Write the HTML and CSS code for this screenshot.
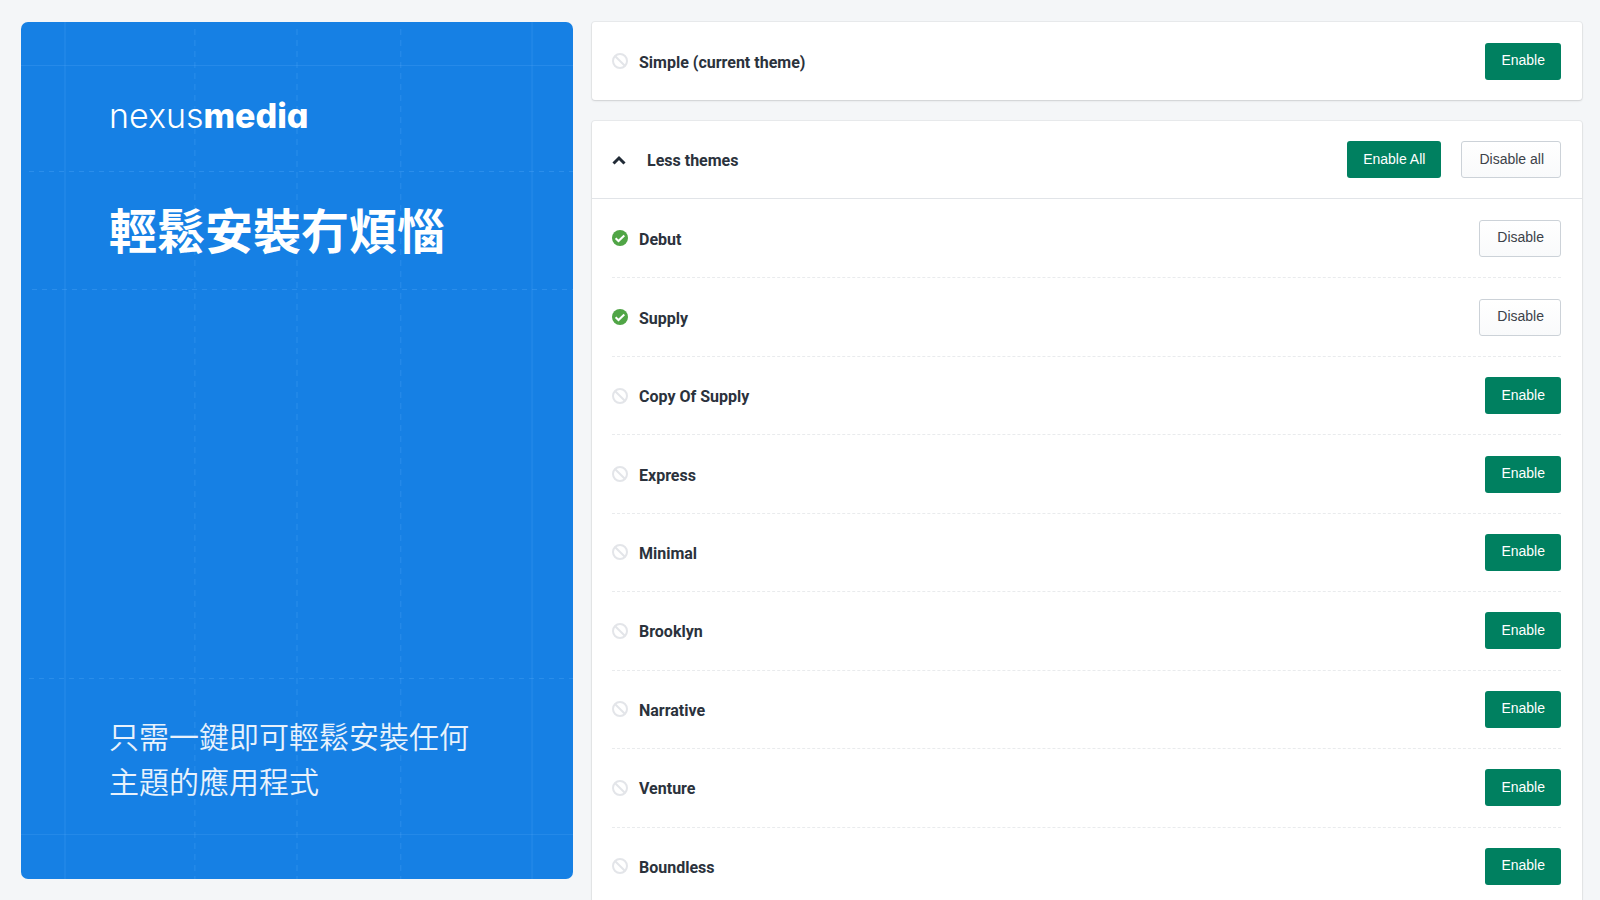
FILE: index.html
```html
<!DOCTYPE html>
<html lang="zh-Hant">
<head>
<meta charset="utf-8">
<meta name="viewport" content="width=device-width, initial-scale=1">
<title>nexusmedia</title>
<link rel="stylesheet" href="styles.css">
</head>
<body>
<svg class="sprite" aria-hidden="true">
  <symbol id="off" viewBox="0 0 16 16"><circle cx="8" cy="8" r="7" fill="none" stroke="#e3e5e9" stroke-width="2"/><path d="M3.2 3.2l9.6 9.6" stroke="#e3e5e9" stroke-width="2"/></symbol>
  <symbol id="on" viewBox="0 0 16 16"><circle cx="8" cy="8" r="8" fill="#50a546"/><path d="M3.6 8.2l2.9 2.8 5.8-5.5" fill="none" stroke="#fff" stroke-width="2"/></symbol>
</svg>
<main class="page">
  <section class="hero">
    <svg class="hero-grid" aria-hidden="true">
      <g class="solid wide"><line x1="44" y1="0" x2="44" y2="100%"/><line x1="92.6%" y1="0" x2="92.6%" y2="100%"/></g>
      <g class="solid"><line x1="0" y1="43.5" x2="100%" y2="43.5"/><line x1="0" y1="94.8%" x2="100%" y2="94.8%"/></g>
      <g class="dash-v"><line x1="31.5%" y1="7" x2="31.5%" y2="100%"/><line x1="50%" y1="7" x2="50%" y2="100%"/><line x1="68.8%" y1="7" x2="68.8%" y2="100%"/></g>
      <g class="dash-h"><line x1="8" y1="149.5" x2="100%" y2="149.5"/><line x1="11" y1="267.5" x2="100%" y2="267.5"/><line x1="8" y1="76.6%" x2="100%" y2="76.6%"/></g>
    </svg>
    <header class="hero-top">
      <div class="logo">nexus<b>media</b></div>
      <h1 class="title">輕鬆安裝冇煩惱</h1>
    </header>
    <p class="lead">只需一鍵即可輕鬆安裝任何主題的應用程式</p>
  </section>
  <div class="themes">
    <section class="card">
      <div class="row"><svg class="status"><use href="#off"/></svg><span class="name">Simple (current theme)</span><button class="btn primary" type="button">Enable</button></div>
    </section>
    <section class="card">
      <div class="head">
        <svg class="chevron" viewBox="0 0 14 10" aria-hidden="true"><path d="M1.5 8.5L7 3l5.5 5.5" fill="none" stroke="#212b36" stroke-width="3"/></svg>
        <h2 class="name">Less themes</h2>
        <div class="actions"><button class="btn primary" type="button">Enable All</button><button class="btn" type="button">Disable all</button></div>
      </div>
      <ul class="list">
        <li class="row"><svg class="status"><use href="#on"/></svg><span class="name">Debut</span><button class="btn" type="button">Disable</button></li>
        <li class="row"><svg class="status"><use href="#on"/></svg><span class="name">Supply</span><button class="btn" type="button">Disable</button></li>
        <li class="row"><svg class="status"><use href="#off"/></svg><span class="name">Copy Of Supply</span><button class="btn primary" type="button">Enable</button></li>
        <li class="row"><svg class="status"><use href="#off"/></svg><span class="name">Express</span><button class="btn primary" type="button">Enable</button></li>
        <li class="row"><svg class="status"><use href="#off"/></svg><span class="name">Minimal</span><button class="btn primary" type="button">Enable</button></li>
        <li class="row"><svg class="status"><use href="#off"/></svg><span class="name">Brooklyn</span><button class="btn primary" type="button">Enable</button></li>
        <li class="row"><svg class="status"><use href="#off"/></svg><span class="name">Narrative</span><button class="btn primary" type="button">Enable</button></li>
        <li class="row"><svg class="status"><use href="#off"/></svg><span class="name">Venture</span><button class="btn primary" type="button">Enable</button></li>
        <li class="row"><svg class="status"><use href="#off"/></svg><span class="name">Boundless</span><button class="btn primary" type="button">Enable</button></li>
      </ul>
    </section>
  </div>
</main>
</body>
</html>
```
FILE: styles.css
```css
* { box-sizing: border-box; }
body {
  margin: 0;
  height: 100vh;
  overflow: hidden;
  background: #f4f6f8;
  color: #2b323c;
  font-family: Roboto, "Noto Sans CJK TC", sans-serif;
}
.sprite { display: none; }
.page {
  display: grid;
  grid-template-columns: minmax(0, 552fr) minmax(0, 990fr);
  gap: 19px;
  align-items: start;
  padding: 22px 18px 21px 21px;
}

.hero {
  position: relative;
  display: flex;
  flex-direction: column;
  justify-content: space-between;
  min-height: calc(100vh - 43px);
  padding: 72px 88px 76px;
  border-radius: 7px;
  overflow: hidden;
  background: #1680e4;
  color: #fff;
}
.hero-grid { position: absolute; inset: 0; width: 100%; height: 100%; stroke: #6db8ff; }
.solid { stroke-opacity: .18; }
.wide { stroke-width: 2; stroke-opacity: .11; }
.dash-v { stroke-opacity: .25; stroke-dasharray: 6 5; }
.dash-h { stroke-opacity: .25; stroke-dasharray: 5 5; }
.hero-top, .lead { position: relative; }
.logo {
  font: 300 34px/44px Inter, sans-serif;
  font-feature-settings: "cv11";
}
.logo b { font-weight: 800; }
.title {
  margin: 55px 0 0;
  font: 700 48px/70px "Noto Sans CJK TC", sans-serif;
}
.lead {
  margin: 0;
  font: 350 30px/45px "Noto Sans CJK TC", sans-serif;
  color: #e8f2fc;
}

.themes { display: grid; gap: 21px; }
.card {
  background: #fff;
  border-radius: 3px;
  box-shadow: 0 0 0 1px rgba(63, 63, 68, .06), 0 1px 2px rgba(63, 63, 68, .15);
}
.row, .head { display: flex; align-items: center; min-height: 78px; }
.row { gap: 11px; }
.card > .row, .head { padding: 0 21px 0 20px; }
.head { gap: 21px; border-bottom: 1px solid #e1e4e8; }
.status { flex: none; width: 16px; height: 16px; }
.chevron { flex: none; width: 14px; height: 10px; }
.name { flex: 1; margin: 0; padding-top: 3px; font-size: 16px; font-weight: 700; line-height: 24px; }
.actions { display: flex; gap: 20px; }
.list {
  display: grid;
  grid-auto-rows: 1fr;
  min-height: 706px;
  margin: 0;
  padding: 0 21px 0 20px;
  list-style: none;
}
.list .row + .row { border-top: 1px dashed #e9ebed; }
.btn {
  height: 37px;
  padding: 0 16px 2px 17px;
  border: 1px solid #ccd2d8;
  border-radius: 3px;
  background: linear-gradient(#fff, #f9fafb);
  color: #3c4249;
  font: 14px "Liberation Sans", Arial, sans-serif;
}
.btn.primary { padding: 0 16px 2px; border: 0; background: #008060; color: #fff; }
```
